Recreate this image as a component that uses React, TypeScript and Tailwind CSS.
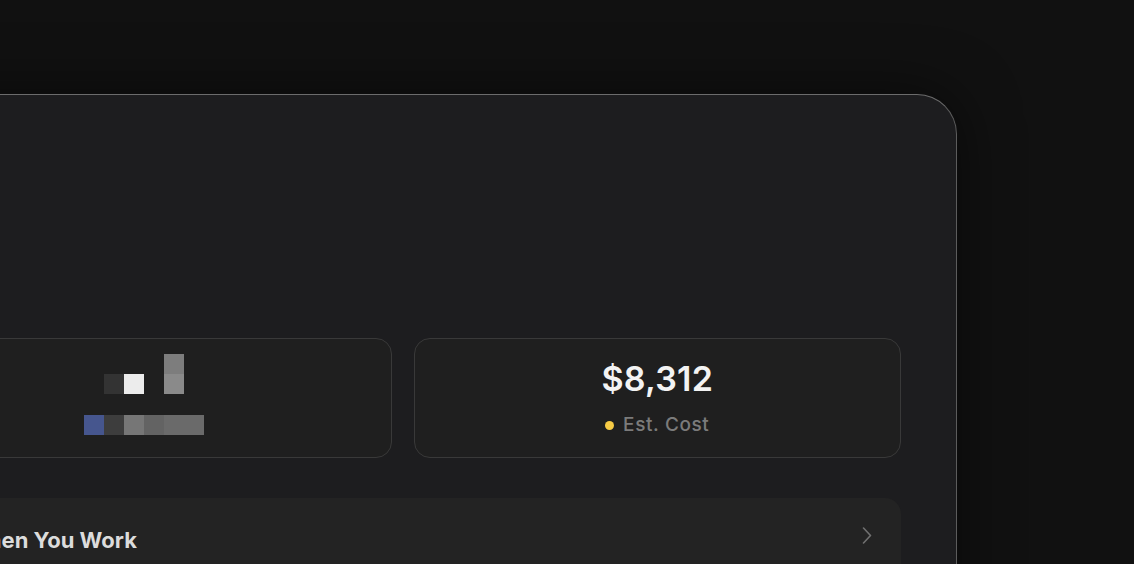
import React from "react";

const Block = ({ c }: { c: string }) => <div className={`w-[20px] h-[20px] ${c}`} />;

export default function App() {
  return (
    <div
      className="w-full h-[564px] overflow-hidden bg-[#111111] pt-[94px]"
      style={{ fontFamily: "Inter, 'Noto Sans', sans-serif" }}
    >
      <div className="ml-[-152px] w-[1109px] h-[600px] rounded-tr-[40px] border border-[#5c5c5c] border-t-[#6c6c6c] bg-[#1d1d1f] px-[55px] pt-[243px] shadow-[0_0_60px_rgba(0,0,0,0.55)]">
        <div className="grid grid-cols-2 gap-[22px]">
          <div className="h-[120px] rounded-[16px] border border-[#393939] bg-[#1f1f1f] flex flex-col items-center pt-[15px] pr-[8px]">
            <div className="grid grid-cols-6">
              <Block c="" />
              <Block c="" />
              <Block c="" />
              <Block c="" />
              <Block c="bg-[#7d7d7d]" />
              <Block c="" />
              <Block c="" />
              <Block c="bg-[#333333]" />
              <Block c="bg-[#ececec]" />
              <Block c="" />
              <Block c="bg-[#8a8a8a]" />
              <Block c="" />
            </div>
            <div className="grid grid-cols-6 mt-[21px]">
              <Block c="bg-[#46568e]" />
              <Block c="bg-[#3d3d3d]" />
              <Block c="bg-[#767676]" />
              <Block c="bg-[#636363]" />
              <Block c="bg-[#6a6a6a]" />
              <Block c="bg-[#6a6a6a]" />
            </div>
          </div>
          <div className="h-[120px] rounded-[16px] border border-[#393939] bg-[#1f1f1f] flex flex-col items-center pt-[20px]">
            <div className="text-[34px] leading-[40px] font-semibold text-[#f3f3f3] tracking-[0.2px]">$8,312</div>
            <div className="mt-[14px] flex items-center gap-[9px]">
              <span className="w-[9px] h-[9px] rounded-full bg-[#f6cb45]" />
              <span className="text-[19px] leading-[24px] font-medium text-[#7b7b7b] tracking-[0.6px]">Est. Cost</span>
            </div>
          </div>
        </div>
        <div className="mt-[40px] h-[84px] rounded-[16px] bg-[#232323] flex items-center justify-between pl-[61px] pr-[29px]">
          <span className="text-[22px] font-bold text-[#dcdcdc]">When You Work</span>
          <svg width="10" height="17" viewBox="0 0 10 17" className="-mt-[10px]">
            <polyline points="1.5,1 8.5,8.5 1.5,16" fill="none" stroke="#707070" strokeWidth="1.6" strokeLinecap="round" strokeLinejoin="round" />
          </svg>
        </div>
      </div>
    </div>
  );
}
